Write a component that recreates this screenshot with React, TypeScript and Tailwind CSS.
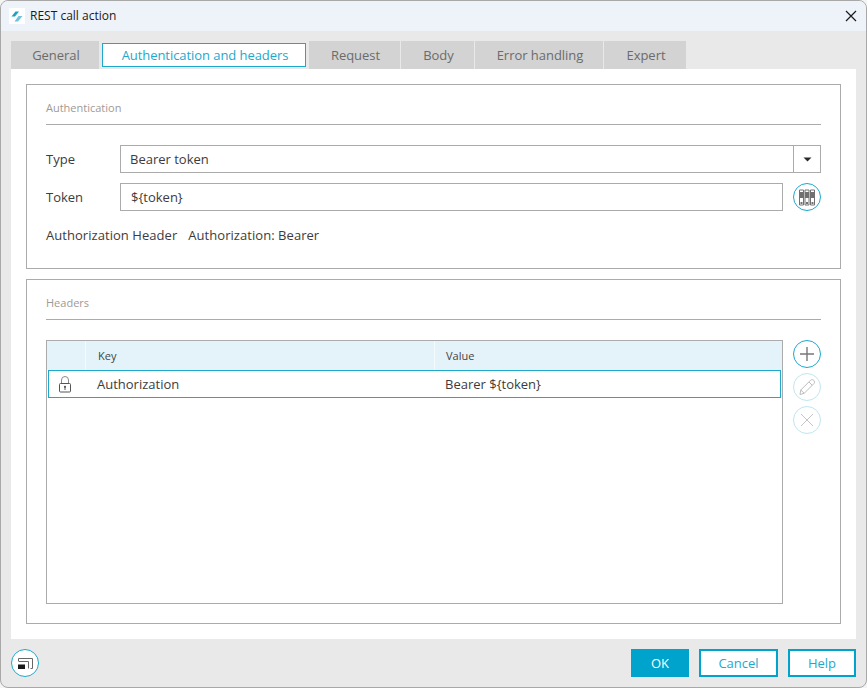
import React from "react";

const font = { fontFamily: '"Open Sans", "Noto Sans", sans-serif' };

function Round({ faded, children, className = "" }: { faded?: boolean; children: React.ReactNode; className?: string }) {
  return (
    <div className={`w-[28px] h-[28px] rounded-full border-[1.5px] bg-white flex items-center justify-center ${faded ? "border-[#bfe6f0]" : "border-[#1ea8cc]"} ${className}`}>
      {children}
    </div>
  );
}

function Tab({ label, w, gap }: { label: string; w: number; gap: string }) {
  return (
    <div style={{ width: w }} className={`h-[28px] bg-[#d3d3d3] flex items-center justify-center text-[13px] text-[#6b6b6b] ${gap}`}>
      <span className="relative top-[1px] left-[1px] tracking-[-0.03px]">{label}</span>
    </div>
  );
}

export default function App() {
  return (
    <div className="w-[867px] h-[688px] bg-[#f4f4f4] overflow-hidden relative text-[#3c3c3c]" style={font}>
      <div className="absolute inset-0 rounded-[8px] border border-[#a8a8a8] bg-[#e9e9e9] overflow-hidden">
        <div className="h-[30px] bg-[#eef3f9] flex items-center pl-[8px] relative">
          <div className="w-[16px] h-[16px] bg-white flex items-center justify-center">
            <svg width="12" height="11" viewBox="0 0 12 11">
              <path d="M0.5 5.5 L4.5 0.5 H8 L4 5.5Z" fill="#1f9fc4" />
              <path d="M3.5 10.5 L7.5 5 H11.5 L7 10.5Z" fill="#6fc3da" />
            </svg>
          </div>
          <span className="ml-[5px] text-[12px] text-[#1a1a1a]">REST call action</span>
          <svg className="absolute left-[844px] top-[9px]" width="12" height="12" viewBox="0 0 12 12">
            <path d="M1 1 L11 11 M11 1 L1 11" stroke="#1a1a1a" strokeWidth="1.2" fill="none" />
          </svg>
        </div>

        <div className="flex items-start pl-[10px] pt-[10px] h-[38px]">
          <Tab label="General" w={88} gap="mr-[3px]" />
          <div className="w-[204px] h-[24px] mt-[2px] mr-[3px] bg-white border border-[#1ea8cc] flex items-center justify-center text-[13px] text-[#1ea8cc]">
            <span className="relative top-[1px] left-[1px] tracking-[-0.06px]">Authentication and headers</span>
          </div>
          <Tab label="Request" w={91} gap="mr-[1px]" />
          <Tab label="Body" w={73} gap="mr-[1px]" />
          <Tab label="Error handling" w={128} gap="mr-[1px]" />
          <Tab label="Expert" w={82} gap="" />
        </div>

        <div className="absolute left-[10px] top-[68px] w-[845px] h-[570px] bg-white px-[15px] pt-[15px]">
          <section className="h-[185px] border border-[#ababab] px-[19px] relative">
            <div className="h-[40px] border-b border-[#ababab] flex items-end pb-[8px] text-[11px] text-[#a09a94]">Authentication</div>
            <div className="flex items-center h-[28px] mt-[20px]">
              <span className="w-[74px] text-[13px] relative top-[1px]">Type</span>
              <div className="flex-1 h-[28px] border border-[#ababab] flex">
                <div className="flex-1 pl-[9px] flex items-center text-[13px]"><span className="relative top-[1px]">Bearer token</span></div>
                <div className="w-[27px] border-l border-[#ababab] flex items-center justify-center">
                  <svg width="9" height="5" viewBox="0 0 9 5"><path d="M0.5 0.5 H8.5 L4.5 4.5Z" fill="#2a2a2a" /></svg>
                </div>
              </div>
            </div>
            <div className="flex items-center h-[28px] mt-[10px]">
              <span className="w-[74px] text-[13px] relative top-[1px]">Token</span>
              <div className="flex-1 h-[28px] border border-[#ababab] pl-[10px] flex items-center text-[13px]"><span className="relative top-[1px]">{"${token}"}</span></div>
              <Round className="ml-[10px]">
                <svg width="16" height="17" viewBox="0 0 16 17" fill="none">
                  <path d="M0.5 1 H4.5 V16 H0.5Z M6 1 H10 V16 H6Z M11.5 1 H15.5 V16 H11.5Z" fill="#fff" stroke="#707070" strokeWidth="1" />
                  <path d="M0.5 3 H4.5 V9 H0.5Z M6 3 H10 V9 H6Z M11.5 3 H15.5 V9 H11.5Z" fill="#707070" />
                  <path d="M1.5 13 H3.5 V15 H1.5Z M7 13 H9 V15 H7Z M12.5 13 H14.5 V15 H12.5Z" fill="#707070" />
                </svg>
              </Round>
            </div>
            <div className="flex items-center mt-[15px] text-[13px] h-[20px] tracking-[0.05px]">
              <span>Authorization Header</span>
              <span className="ml-[11px]">Authorization: Bearer</span>
            </div>
          </section>

          <section className="h-[345px] mt-[10px] border border-[#ababab] px-[19px] relative">
            <div className="h-[40px] border-b border-[#ababab] flex items-end pb-[8px] text-[11px] text-[#a09a94]">Headers</div>
            <div className="flex mt-[20px]">
              <div className="w-[737px] h-[264px] border border-[#ababab]">
                <div className="h-[29px] bg-[#e4f3f9] flex text-[11px] text-[#444]">
                  <div className="w-[39px] border-r border-[#f4fbfd]" />
                  <div className="w-[349px] border-r border-[#f4fbfd] pl-[12px] flex items-center"><span className="relative top-[1px]">Key</span></div>
                  <div className="flex-1 pl-[11px] flex items-center"><span className="relative top-[1px]">Value</span></div>
                </div>
                <div className="h-[28px] mx-[1px] border border-[#1ea8cc] flex items-center text-[13px]">
                  <div className="w-[48px] pl-[9px] flex items-center">
                    <svg width="14" height="17" viewBox="0 0 14 17" fill="none">
                      <path d="M3.5 7 V4 a3.5 3.5 0 0 1 7 0 V7" stroke="#8a8a8a" strokeWidth="1" />
                      <rect x="1.5" y="7.5" width="11" height="8.5" rx="1" stroke="#555" strokeWidth="1" />
                      <circle cx="7" cy="10.8" r="1.1" fill="#555" />
                      <path d="M7 11 V14" stroke="#555" strokeWidth="1" />
                    </svg>
                  </div>
                  <span className="w-[348px] relative top-[1px]">Authorization</span>
                  <span className="relative top-[1px]">{"Bearer ${token}"}</span>
                </div>
              </div>
              <div className="ml-[10px] flex flex-col gap-[5px]">
                <Round>
                  <svg width="16" height="16" viewBox="0 0 16 16"><path d="M8 1 V15 M1 8 H15" stroke="#777" strokeWidth="1.4" fill="none" /></svg>
                </Round>
                <Round faded>
                  <svg width="18" height="18" viewBox="0 0 18 18" fill="none">
                    <path d="M2 16.5 L2.8 12 L12.5 2.3 C13.5 1.3 15 1.6 15.8 2.4 C16.6 3.2 16.9 4.6 15.9 5.6 L6.2 15.3 Z" stroke="#bdbdbd" strokeWidth="1" />
                    <path d="M2.8 12 L6.2 15.3 M11 4 L14.2 7.2" stroke="#bdbdbd" strokeWidth="1" />
                  </svg>
                </Round>
                <Round faded>
                  <svg width="14" height="14" viewBox="0 0 14 14"><path d="M1 1 L13 13 M13 1 L1 13" stroke="#c4c4c4" strokeWidth="1" fill="none" /></svg>
                </Round>
              </div>
            </div>
          </section>
        </div>

        <div className="absolute left-[10px] top-[648px]">
          <Round>
            <svg width="15" height="11" viewBox="0 0 15 11" fill="none">
              <path d="M0.5 3 V0.5 H14.5 V10.5 H12.5" stroke="#666" strokeWidth="1" />
              <path d="M0.5 3.5 H10.5 V10.5" stroke="#666" strokeWidth="1" />
              <rect x="0" y="6.5" width="7" height="4.5" fill="#1a1a1a" />
            </svg>
          </Round>
        </div>

        <div className="absolute right-[10px] top-[648px] flex gap-[10px] text-[13px]">
          <div className="w-[58px] h-[28px] bg-[#00a3cc] text-white flex items-center justify-center"><span className="relative top-[1px]">OK</span></div>
          <div className="w-[79px] h-[28px] bg-white border-2 border-[#00a3cc] text-[#1ea8cc] flex items-center justify-center"><span className="relative top-[1px]">Cancel</span></div>
          <div className="w-[68px] h-[28px] bg-white border-2 border-[#00a3cc] text-[#1ea8cc] flex items-center justify-center"><span className="relative top-[1px]">Help</span></div>
        </div>
      </div>
    </div>
  );
}
